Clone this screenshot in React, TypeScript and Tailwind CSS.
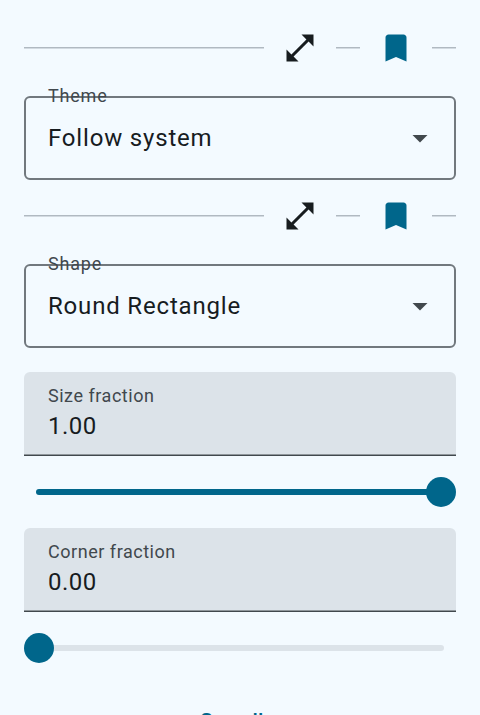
import React from "react";

function ExpandIcon() {
  return (
    <svg className="block h-9 w-9" viewBox="0 0 24 24" fill="#171c1f">
      <path d="M21 11V3h-8l3.29 3.29-10 10L3 13v8h8l-3.29-3.29 10-10z" />
    </svg>
  );
}

function BookmarkIcon() {
  return (
    <svg className="block h-9 w-9" viewBox="0 0 24 24" fill="#00668b">
      <path d="M17 3H7c-1.1 0-1.99.9-1.99 2L5 21l7-3 7 3V5c0-1.1-.9-2-2-2z" />
    </svg>
  );
}

function Line({ className }: { className: string }) {
  return (
    <div className={className}>
      <div className="h-px bg-[#b0b9c1]" />
      <div className="h-px bg-[#d2dae1]" />
    </div>
  );
}

function Divider() {
  return (
    <div className="flex h-12 items-center">
      <Line className="flex-1" />
      <div className="mx-[18px]"><ExpandIcon /></div>
      <Line className="w-6" />
      <div className="mx-[18px]"><BookmarkIcon /></div>
      <Line className="w-6" />
    </div>
  );
}

function Select({ label, value }: { label: string; value: string }) {
  return (
    <div className="relative flex h-[84px] items-center justify-between rounded-[6px] border-2 border-[#71787e] pl-[22px] pr-4">
      <span className="absolute left-[22px] top-[-14px] text-[18px] leading-6 tracking-[0.8px] text-[#41484d]">{label}</span>
      <span className="text-2xl leading-9 tracking-[0.82px]">{value}</span>
      <svg className="block h-9 w-9" viewBox="0 0 24 24" fill="#41484d"><path d="M7 10l5 5 5-5z" /></svg>
    </div>
  );
}

function Field({ label, value }: { label: string; value: string }) {
  return (
    <div className="flex h-[84px] flex-col rounded-t-[6px] bg-[#dce3e9]">
      <div className="flex-1 px-6 pt-3">
        <div className="text-[18px] leading-6 tracking-[0.53px] text-[#41484d]">{label}</div>
        <div className="text-2xl leading-9 tracking-[0.5px]">{value}</div>
      </div>
      <div className="h-px bg-[#8f969b]" />
      <div className="h-px bg-[#41484d]" />
    </div>
  );
}

function Slider({ full }: { full: boolean }) {
  return (
    <div className="flex h-[72px] items-center">
      {full ? (
        <>
          <div className="-mr-2 ml-3 h-1.5 flex-1 rounded-l-[3px] bg-[#00668b]" />
          <div className="h-[30px] w-[30px] rounded-full bg-[#00668b]" />
        </>
      ) : (
        <>
          <div className="z-10 h-[30px] w-[30px] rounded-full bg-[#00668b]" />
          <div className="-ml-2 mr-3 h-1.5 flex-1 rounded-r-[3px] bg-[#dce3e9]" />
        </>
      )}
    </div>
  );
}

export default function App() {
  return (
    <div className="h-[715px] overflow-hidden bg-[#f3faff] px-6 pt-6 font-[Roboto,sans-serif] text-[#171c1f]">
      <Divider />
      <div className="h-6" />
      <Select label="Theme" value="Follow system" />
      <div className="h-3" />
      <Divider />
      <div className="h-6" />
      <Select label="Shape" value="Round Rectangle" />
      <div className="h-6" />
      <Field label="Size fraction" value="1.00" />
      <Slider full />
      <Field label="Corner fraction" value="0.00" />
      <Slider full={false} />
      <div className="mt-[22px] pl-[176px] text-[21px] font-medium leading-[30px] tracking-[0.15px] text-[#00668b]">See all</div>
    </div>
  );
}
